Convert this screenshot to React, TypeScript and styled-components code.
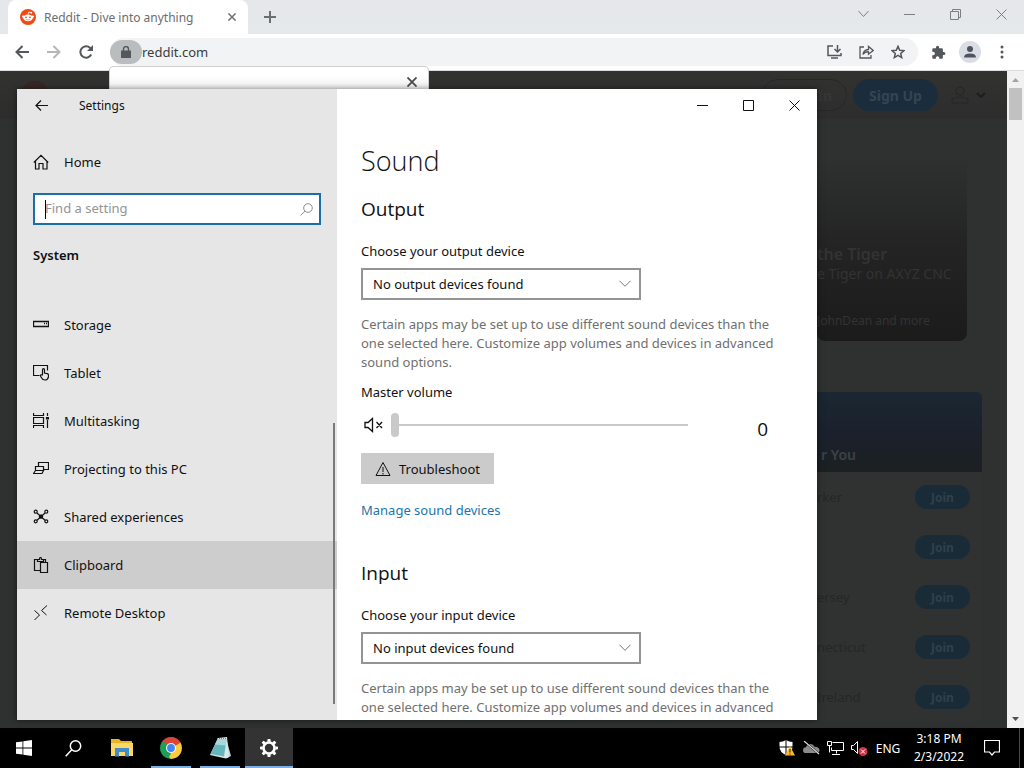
import React from "react";
import styled, { createGlobalStyle, css } from "styled-components";

const GlobalStyle = createGlobalStyle`
  * { box-sizing: border-box; }
  body { margin: 0; background: #000; overflow: hidden; }
  body, button, input, select { font-family: "Noto Sans", "Open Sans", sans-serif; font-size: 13px; }
  button { border: 0; padding: 0; background: none; color: inherit; }
  h1, h2, h3, p, ul { margin: 0; padding: 0; font-weight: 400; }
  ul { list-style: none; }
  svg { display: block; flex: none; }
`;

/* ---------- desktop ---------- */
const Desktop = styled.div`
  position: relative;
  display: flex;
  flex-direction: column;
  height: 100vh;
  overflow: hidden;
`;

/* ---------- browser ---------- */
const Browser = styled.div`
  flex: 1;
  min-height: 0;
  display: flex;
  flex-direction: column;
`;

const TabStrip = styled.div`
  display: flex;
  align-items: flex-start;
  height: 34px;
  padding-left: 8px;
  background: linear-gradient(#e6e7eb, #e4e9ea);
`;

const Tab = styled.div`
  display: flex;
  align-items: center;
  gap: 8px;
  width: 240px;
  height: 34px;
  padding: 0 9px 0 12px;
  border-radius: 8px 8px 0 0;
  background: #fff;
  color: #6c6d70;
  font-size: 12px;
`;

const TabTitle = styled.span`
  flex: 1;
  white-space: nowrap;
`;

const IconButton = styled.button<{ $w?: number; $h?: number }>`
  display: flex;
  align-items: center;
  justify-content: center;
  width: ${(p) => p.$w ?? 32}px;
  height: ${(p) => p.$h ?? 32}px;
`;

const Spacer = styled.div`
  flex: 1;
`;

const WindowButtons = styled.div`
  display: flex;
  color: #7b8082;
`;

const Toolbar = styled.div`
  display: flex;
  align-items: center;
  height: 37px;
  padding: 0 6px;
  border-bottom: 1px solid #dcdcdc;
  background: #fff;
  color: #54575b;
`;

const AddressBar = styled.div`
  flex: 1;
  display: flex;
  align-items: center;
  height: 28px;
  margin: 0 4px 0 8px;
  padding-right: 4px;
  border-radius: 14px;
  background: #f1f3f4;
`;

const LockButton = styled.button`
  display: flex;
  align-items: center;
  justify-content: center;
  width: 32px;
  height: 24px;
  border-radius: 12px;
  background: #babdbe;
`;

const AddressInput = styled.input`
  flex: 1;
  min-width: 0;
  border: 0;
  padding: 0;
  outline: 0;
  background: transparent;
  color: #3a3c3f;
`;

const Avatar = styled.span`
  display: flex;
  align-items: center;
  justify-content: center;
  width: 22px;
  height: 22px;
  border-radius: 50%;
  background: #dadde4;
  color: #4e535f;
`;

const Viewport = styled.div`
  flex: 1;
  min-height: 0;
  display: flex;
  background: #2e3130;
`;

const Page = styled.div`
  flex: 1;
  min-width: 0;
  overflow: hidden;
`;

const PageHeader = styled.header`
  display: flex;
  align-items: center;
  gap: 6px;
  height: 48px;
  padding: 0 21px;
  background: linear-gradient(#323231, #2c2d2c);
`;

const PageLogo = styled.div`
  width: 28px;
  height: 28px;
  border-radius: 50%;
  background: #352725;
`;

const PagePill = styled.button<{ $filled?: boolean }>`
  width: 85px;
  height: 32px;
  border-radius: 16px;
  border: 1px solid ${(p) => (p.$filled ? "#1b2d3d" : "#262827")};
  background: ${(p) => (p.$filled ? "#1b2d3d" : "transparent")};
  color: ${(p) => (p.$filled ? "#344552" : "#363737")};
  font-size: 14px;
  font-weight: 700;
  text-align: ${(p) => (p.$filled ? "center" : "right")};
  padding: 0 ${(p) => (p.$filled ? 0 : 14)}px 0 0;
`;

const UserMenu = styled.button`
  display: flex;
  align-items: center;
  gap: 6px;
  margin-left: 6px;
  color: #1d1f1f;
`;

const PageBody = styled.main`
  display: flex;
  flex-direction: column;
  align-items: flex-end;
  gap: 51px;
  padding: 42px 25px 0 0;
`;

const TrendCard = styled.article`
  display: flex;
  flex-direction: column;
  width: 150px;
  height: 180px;
  margin-right: 15px;
  padding: 83px 0 0;
  border-radius: 0 0 8px 8px;
  background: linear-gradient(#2e3030, #242424 45%, #1b1b1b);
  color: #333;
  white-space: nowrap;
`;

const TrendTitle = styled.h2`
  font-size: 16px;
  line-height: 20px;
  font-weight: 600;
`;

const TrendText = styled.p`
  font-size: 14px;
  line-height: 20px;
`;

const TrendFooter = styled.p`
  margin-top: 28px;
  font-size: 12px;
  line-height: 18px;
`;

const Communities = styled.section`
  width: 165px;
  border-radius: 0 6px 0 0;
  overflow: hidden;
  background: #303131;
`;

const CommunitiesHead = styled.h2`
  display: flex;
  align-items: flex-end;
  height: 80px;
  padding: 0 4px 8px;
  background: linear-gradient(#1a2732, #1b202b 60%, #1c2022);
  color: #3b4246;
  font-size: 14px;
  font-weight: 600;
`;

const CommunityRow = styled.li`
  display: flex;
  align-items: center;
  justify-content: space-between;
  height: 50px;
  padding-right: 12px;
  color: #252727;
`;

const JoinButton = styled.button`
  width: 55px;
  height: 24px;
  border-radius: 12px;
  background: #1a2b38;
  color: #30404b;
  font-size: 12px;
  font-weight: 700;
`;

const PageScrollbar = styled.div`
  display: flex;
  flex-direction: column;
  align-items: center;
  width: 17px;
  background: #f1f1f1;
`;

const ScrollThumb = styled.div`
  width: 13px;
  height: 32px;
  background: #c1c1c1;
`;

const Popup = styled.div`
  position: absolute;
  top: 66px;
  left: 109px;
  display: flex;
  justify-content: flex-end;
  width: 320px;
  height: 60px;
  border: 1px solid #cfcfcf;
  border-radius: 4px;
  background: linear-gradient(#fff 8px, #eee 24px);
  color: #4c4c4c;
`;

/* ---------- settings window ---------- */
const SettingsWindow = styled.div`
  position: absolute;
  top: 89px;
  bottom: 48px;
  left: 17px;
  display: flex;
  width: min(800px, calc(100vw - 34px));
  overflow: hidden;
  background: #fff;
  color: #111;
  box-shadow: 0 0 6px rgba(0, 0, 0, 0.5);
`;

const Sidebar = styled.nav`
  position: relative;
  flex: none;
  width: 320px;
  background: #e6e6e6;
`;

const SidebarTitle = styled.div`
  display: flex;
  align-items: center;
  gap: 14px;
  height: 32px;
  font-size: 12px;
`;

const NavItem = styled.a<{ $active?: boolean }>`
  display: flex;
  align-items: center;
  gap: 15px;
  height: 48px;
  padding-left: 16px;
  color: #111;
  text-decoration: none;
  ${(p) => p.$active && css`background: #cdcdcd;`}
`;

const HomeWrap = styled.div`
  padding: 17px 0 7px;
`;

const SearchBox = styled.label`
  position: relative;
  display: flex;
  align-items: center;
  height: 32px;
  margin: 0 16px;
  padding: 0 6px 0 10px;
  border: 2px solid #1b6fa8;
  background: #fff;
  color: #8d8d8d;
`;

const SearchInput = styled.input`
  flex: 1;
  min-width: 0;
  border: 0;
  padding: 0 0 2px;
  outline: 0;
  background: transparent;
  caret-color: transparent;
  &::placeholder { color: #949494; }
`;

const Caret = styled.span`
  position: absolute;
  left: 10px;
  width: 1px;
  height: 19px;
  background: #000;
`;

const Group = styled.h2`
  margin: 20px 16px 36px;
  font-size: 13px;
  line-height: 20px;
  font-weight: 600;
`;

const SidebarThumb = styled.div`
  position: absolute;
  right: 2px;
  bottom: 16px;
  width: 2px;
  height: 281px;
  background: #7a7a7a;
`;

const Panel = styled.section`
  flex: 1;
  min-width: 0;
  display: flex;
  flex-direction: column;
`;

const PanelTitlebar = styled.div`
  display: flex;
  justify-content: flex-end;
  flex: none;
  height: 32px;
`;

const PanelBody = styled.div`
  flex: 1;
  min-height: 0;
  overflow: hidden;
  padding: 22px 24px 0;
`;

const Title = styled.h1`
  font-family: "Open Sans", sans-serif;
  font-size: 27px;
  font-weight: 300;
  line-height: 36px;
`;

const Heading = styled.h2<{ $gap: number }>`
  margin-top: ${(p) => p.$gap}px;
  font-family: "Open Sans", sans-serif;
  font-size: 19px;
  line-height: 28px;
`;

const FieldLabel = styled.label<{ $gap: number }>`
  display: block;
  margin-top: ${(p) => p.$gap}px;
  line-height: 20px;
`;

const SelectWrap = styled.div`
  display: grid;
  align-items: center;
  width: 280px;
  margin-top: 7px;
  & > * { grid-area: 1 / 1; }
  & > svg { justify-self: end; margin-right: 10px; pointer-events: none; }
`;

const Select = styled.select`
  appearance: none;
  width: 100%;
  height: 32px;
  padding: 0 10px;
  border: 2px solid #949494;
  border-radius: 0;
  background: #fff;
  color: #111;
`;

const Description = styled.p`
  max-width: 424px;
  margin-top: 15px;
  line-height: 19px;
  color: #707070;
`;

const VolumeRow = styled.div`
  display: flex;
  align-items: flex-start;
  height: 32px;
  margin-top: 11px;
`;

const MuteButton = styled.button`
  display: flex;
  align-items: center;
  width: 30px;
  height: 24px;
  padding-left: 3px;
`;

const Slider = styled.input`
  appearance: none;
  width: 297px;
  height: 24px;
  margin: 0;
  background: linear-gradient(#c9c9c9, #c9c9c9) center / 100% 2px no-repeat;
  &::-webkit-slider-thumb {
    appearance: none;
    width: 8px;
    height: 24px;
    border-radius: 4px;
    background: #c9c9c9;
  }
`;

const VolumeValue = styled.output`
  width: 80px;
  font-family: "Open Sans", sans-serif;
  font-size: 19px;
  line-height: 32px;
  text-align: right;
`;

const ActionButton = styled.button`
  display: flex;
  align-items: center;
  gap: 8px;
  height: 31px;
  margin-top: 8px;
  padding: 0 14px;
  background: #cbcbcb;
`;

const TextLink = styled.a`
  display: block;
  margin-top: 16px;
  line-height: 20px;
  color: #1a75ad;
  text-decoration: none;
`;

/* ---------- taskbar ---------- */
const Taskbar = styled.footer`
  display: flex;
  align-items: stretch;
  flex: none;
  height: 40px;
  padding-right: 4px;
  background: #000;
  color: #fff;
`;

const Apps = styled.div`
  display: flex;
  gap: 1px;
`;

const TaskButton = styled.button<{ $state?: "open" | "active" }>`
  display: flex;
  align-items: center;
  justify-content: center;
  width: 48px;
  ${(p) =>
    p.$state &&
    css`
      background: linear-gradient(#7ab0e6, #7ab0e6) bottom / ${p.$state === "active" ? 48 : 40}px 2px no-repeat
        ${p.$state === "active" ? "#333" : "transparent"};
    `}
`;

const Tray = styled.div`
  display: flex;
  align-items: center;
  font-size: 12px;
`;

const Language = styled.button`
  width: 34px;
  font-size: 12px;
`;

const Clock = styled.time`
  width: 68px;
  line-height: 18px;
  text-align: center;
  font-size: 12px;
`;

const Notifications = styled.button`
  display: flex;
  align-items: center;
  justify-content: center;
  width: 47px;
  padding-right: 9px;
  border-right: 1px solid #4a4a4a;
`;

/* ---------- icons ---------- */
type IconProps = { w?: number; h?: number; box?: string; sw?: number; children: React.ReactNode };
const Line = ({ w = 16, h, box, sw = 1, children }: IconProps) => (
  <svg width={w} height={h ?? w} viewBox={box ?? `0 0 ${w} ${h ?? w}`} fill="none" stroke="currentColor" strokeWidth={sw} aria-hidden="true">
    {children}
  </svg>
);

const RedditIcon = () => (
  <svg width="16" height="16" viewBox="0 0 16 16" aria-hidden="true">
    <circle cx="8" cy="8" r="8" fill="#f04a15" />
    <path d="M8 5.6l.7-2.6 2.2.6" fill="none" stroke="#fff" strokeWidth=".8" />
    <circle cx="11.3" cy="3.7" r=".9" fill="#fff" />
    <circle cx="3.3" cy="7.6" r="1.2" fill="#fff" />
    <circle cx="12.7" cy="7.6" r="1.2" fill="#fff" />
    <ellipse cx="8" cy="8.9" rx="4.8" ry="3.4" fill="#fff" />
    <circle cx="6" cy="8.3" r=".9" fill="#f04a15" />
    <circle cx="10" cy="8.3" r=".9" fill="#f04a15" />
    <path d="M6.2 10.5q1.8 1 3.6 0" fill="none" stroke="#f04a15" strokeWidth=".6" />
  </svg>
);

const Cross = ({ size = 11, sw = 1 }: { size?: number; sw?: number }) => (
  <Line w={size} sw={sw} box="0 0 11 11"><path d="M.5.5l10 10M10.5.5l-10 10" /></Line>
);

const icons = {
  storage: <Line sw={1.3}><path d="M.5 4.500h15v5H.5z" /><path d="M11 6.500h1M13 6.500h1" /></Line>,
  tablet: (
    <Line sw={1.2}>
      <path d="M6.500 10.500h-6v-10h14v5" />
      <path d="M9.500 10.500V4.700a1 1 0 0 1 2 0V8l2.800.6q1.200.4 1.200 1.600v1.500q-.6 3.300-3.500 3.300-2.400 0-3.500-2.300l-1.200-2q.2-1.300 2.200-.7z" />
    </Line>
  ),
  multitask: (
    <Line sw={1.2}>
      <path d="M.5 0v2.500h10V0M.5 15v-2.500h10V15M.5 4.500h10v6H.5zM14.500 0v3M14.500 7v8" />
      <path d="M13.500 4.500h2v1.500h-2z" fill="currentColor" />
    </Line>
  ),
  project: (
    <Line sw={1.2}>
      <path d="M5.500 5.500v-4h10v7h-5" />
      <path d="M2.500 9.500v-4h8v4zM.5 12.500l2-3h8l-1.500 3z" />
    </Line>
  ),
  shared: (
    <Line sw={1.2}>
      <circle cx="2.700" cy="2.700" r="1.500" /><circle cx="13.300" cy="2.700" r="1.500" />
      <circle cx="2.700" cy="12.300" r="1.500" /><circle cx="13.300" cy="12.300" r="1.500" />
      <path d="M4 4l8 7.200M12 4l-8 7.200M6.500 6.200h3v3h-3z" />
    </Line>
  ),
  clipboard: (
    <Line sw={1.2}>
      <path d="M7 13.500H1.500v-11H5M10 2.500h2.500V5M4.500 4.500v-2h2q0-2 1-2t1 2h2v2z" />
      <path d="M7.500 5.500h7v10h-7z" />
    </Line>
  ),
  remote: <Line><path d="M1.500 5.500l5 4.500-5 5M14 .5L8.500 5.500 13.500 10" /></Line>,
  home: <Line sw={1.2}><path d="M2.500 7.500v7.500h3.500v-5.500h4V15h4V7.500M.8 8.500L8 1.300l7.200 7.200" /></Line>,
};

const Chevron = () => <Line w={12} h={8}><path d="M.5.8L6 6.300 11.500.8" stroke="#777" /></Line>;

const navItems: { label: string; icon: keyof typeof icons; active?: boolean }[] = [
  { label: "Storage", icon: "storage" },
  { label: "Tablet", icon: "tablet" },
  { label: "Multitasking", icon: "multitask" },
  { label: "Projecting to this PC", icon: "project" },
  { label: "Shared experiences", icon: "shared" },
  { label: "Clipboard", icon: "clipboard", active: true },
  { label: "Remote Desktop", icon: "remote" },
];

const communities = ["rker", "", "ersey", "necticut", "Ireland"];

const DeviceField = ({ kind }: { kind: "output" | "input" }) => (
  <>
    <FieldLabel $gap={18} htmlFor={kind}>Choose your {kind} device</FieldLabel>
    <SelectWrap>
      <Select id={kind}><option>No {kind} devices found</option></Select>
      <Chevron />
    </SelectWrap>
    <Description>
      Certain apps may be set up to use different sound devices than the one selected here. Customize app volumes and
      devices in advanced sound options.
    </Description>
  </>
);

const BrowserWindow = () => (
  <Browser>
    <TabStrip>
      <Tab>
        <RedditIcon />
        <TabTitle>Reddit - Dive into anything</TabTitle>
        <IconButton $w={14} $h={14} aria-label="Close tab"><Cross size={8} sw={2} /></IconButton>
      </Tab>
      <IconButton $w={44} $h={34} aria-label="New tab">
        <Line w={12} sw={2}><path d="M6 0v12M0 6h12" stroke="#6b6e71" /></Line>
      </IconButton>
      <Spacer />
      <WindowButtons>
        <IconButton $w={46} $h={28} aria-label="Search tabs"><Line w={11} h={8}><path d="M.5 1l5 5.500 5-5.500" /></Line></IconButton>
        <IconButton $w={46} $h={28} aria-label="Minimize browser"><Line w={11}><path d="M0 5.500h11" /></Line></IconButton>
        <IconButton $w={46} $h={28} aria-label="Restore browser"><Line w={11}><path d="M.5 2.500h8v8h-8zM2.500 2.500v-2h8v8h-2" /></Line></IconButton>
        <IconButton $w={46} $h={28} aria-label="Close browser"><Cross /></IconButton>
      </WindowButtons>
    </TabStrip>
    <Toolbar>
      <IconButton aria-label="Back"><Line w={14} sw={2}><path d="M14 7H1.500M7.500 1l-6 6 6 6" /></Line></IconButton>
      <IconButton aria-label="Forward"><Line w={14} sw={2}><path d="M0 7h12.500M6.500 1l6 6-6 6" stroke="#b4b6b8" /></Line></IconButton>
      <IconButton aria-label="Reload">
        <Line w={14} sw={2}><path d="M12.200 9.500A5.700 5.700 0 1 1 11.200 3L13 4.800" /><path d="M14 0v6H8z" fill="currentColor" stroke="none" /></Line>
      </IconButton>
      <AddressBar>
        <LockButton aria-label="Site information">
          <Line w={10} h={12}><path d="M0 4.500h10V12H0z" fill="currentColor" stroke="none" /><path d="M2.500 5V3a2.500 2.500 0 0 1 5 0v2" strokeWidth="1.400" /></Line>
        </LockButton>
        <AddressInput aria-label="Address" defaultValue="reddit.com" />
        <IconButton aria-label="Install">
          <Line w={15} h={14} sw={1.500}><path d="M6 1H1v9.500h13V8M4 13h7" /><path d="M10.500 0v6.500M7.500 4l3 3 3-3" /></Line>
        </IconButton>
        <IconButton aria-label="Share">
          <Line w={15} h={14} sw={1.300}><path d="M5 2H1v11h11v-3M4 9.500q.5-4.500 5.500-5V1.500l4.700 4-4.700 3.700V6.800Q6 6.500 4 9.500z" /></Line>
        </IconButton>
        <IconButton aria-label="Bookmark">
          <Line w={14} sw={1.500}><path d="M7 1.300l1.700 3.900 4.200.4-3.200 2.800 1 4.200L7 10.400l-3.700 2.200 1-4.200L1.100 5.600l4.200-.4z" /></Line>
        </IconButton>
      </AddressBar>
      <IconButton aria-label="Extensions">
        <svg width="15" height="15" viewBox="0 0 24 24" fill="currentColor" aria-hidden="true">
          <path d="M20.500 11H19V7a2 2 0 0 0-2-2h-4V3.500a2.500 2.500 0 0 0-5 0V5H4a2 2 0 0 0-2 2v3.800h1.500a2.700 2.700 0 0 1 0 5.400H2V20a2 2 0 0 0 2 2h3.800v-1.500a2.700 2.700 0 0 1 5.400 0V22H17a2 2 0 0 0 2-2v-4h1.500a2.500 2.500 0 0 0 0-5z" />
        </svg>
      </IconButton>
      <IconButton aria-label="Profile">
        <Avatar><svg width="14" height="14" viewBox="0 0 14 14" fill="currentColor" aria-hidden="true"><circle cx="7" cy="4" r="3" /><path d="M1 12.500q0-4 6-4t6 4z" /></svg></Avatar>
      </IconButton>
      <IconButton aria-label="Menu">
        <svg width="4" height="14" viewBox="0 0 4 14" fill="currentColor" aria-hidden="true"><circle cx="2" cy="2" r="1.500" /><circle cx="2" cy="7" r="1.500" /><circle cx="2" cy="12" r="1.500" /></svg>
      </IconButton>
    </Toolbar>
    <Viewport>
      <Page>
        <PageHeader>
          <PageLogo />
          <Spacer />
          <PagePill>In</PagePill>
          <PagePill $filled>Sign Up</PagePill>
          <UserMenu aria-label="User menu">
            <Line w={20}><circle cx="10" cy="6" r="4" stroke="#242626" /><path d="M2 18v-4q8-4 16 0v4z" stroke="#242626" /></Line>
            <Line w={10} h={6} sw={2}><path d="M1 1l4 4 4-4" /></Line>
          </UserMenu>
        </PageHeader>
        <PageBody>
          <TrendCard>
            <TrendTitle>the Tiger</TrendTitle>
            <TrendText>e Tiger on AXYZ CNC</TrendText>
            <TrendFooter>JohnDean and more</TrendFooter>
          </TrendCard>
          <Communities>
            <CommunitiesHead>r You</CommunitiesHead>
            <ul>
              {communities.map((name, i) => (
                <CommunityRow key={i}><span>{name}</span><JoinButton>Join</JoinButton></CommunityRow>
              ))}
            </ul>
          </Communities>
        </PageBody>
      </Page>
      <PageScrollbar>
        <svg width="17" height="17" viewBox="0 0 17 17" aria-hidden="true"><path d="M5 11l3.500-4 3.500 4z" fill="#a3a3a3" /></svg>
        <ScrollThumb />
        <Spacer />
        <svg width="17" height="17" viewBox="0 0 17 17" aria-hidden="true"><path d="M5 6l3.500 4L12 6z" fill="#505050" /></svg>
      </PageScrollbar>
    </Viewport>
  </Browser>
);

const SettingsApp = () => (
  <SettingsWindow>
    <Sidebar>
      <SidebarTitle>
        <IconButton $w={48} aria-label="Back to previous"><Line w={13} h={11}><path d="M13 5.500H1M6 .5l-5 5 5 5" strokeWidth="1.200" /></Line></IconButton>
        <span>Settings</span>
      </SidebarTitle>
      <HomeWrap><NavItem href="#home">{icons.home}Home</NavItem></HomeWrap>
      <SearchBox>
        <Caret />
        <SearchInput type="text" aria-label="Find a setting" placeholder="Find a setting" />
        <Line w={13}><circle cx="8" cy="5" r="4.300" /><path d="M5 8.200L.5 12.500" /></Line>
      </SearchBox>
      <Group>System</Group>
      <ul>
        {navItems.map((n) => (
          <li key={n.label}><NavItem href={`#${n.icon}`} $active={n.active}>{icons[n.icon]}{n.label}</NavItem></li>
        ))}
      </ul>
      <SidebarThumb />
    </Sidebar>
    <Panel>
      <PanelTitlebar>
        <IconButton $w={46} aria-label="Minimize"><Line w={11}><path d="M0 5.500h11" /></Line></IconButton>
        <IconButton $w={46} aria-label="Maximize"><Line w={11}><path d="M.5.5h10v10H.5z" /></Line></IconButton>
        <IconButton $w={46} aria-label="Close"><Cross /></IconButton>
      </PanelTitlebar>
      <PanelBody>
        <Title>Sound</Title>
        <Heading $gap={16}>Output</Heading>
        <DeviceField kind="output" />
        <FieldLabel $gap={10} htmlFor="volume">Master volume</FieldLabel>
        <VolumeRow>
          <MuteButton aria-label="Unmute">
            <Line w={20} h={16} sw={1.300}><path d="M1 5.500h3L8.500 1.500v13L4 10.500H1zM12.500 5l5.500 6M18 5l-5.500 6" /></Line>
          </MuteButton>
          <Slider id="volume" type="range" min={0} max={100} defaultValue={0} />
          <VolumeValue htmlFor="volume">0</VolumeValue>
        </VolumeRow>
        <ActionButton>
          <Line><path d="M8 1.500l7 13H1zM8 6v5M8 12v1.500" /></Line>
          Troubleshoot
        </ActionButton>
        <TextLink href="#devices">Manage sound devices</TextLink>
        <Heading $gap={39}>Input</Heading>
        <DeviceField kind="input" />
      </PanelBody>
    </Panel>
  </SettingsWindow>
);

const gearTeeth = [0, 45, 90, 135, 180, 225, 270, 315];

const TaskbarView = () => (
  <Taskbar>
    <Apps>
      <TaskButton aria-label="Start">
        <svg width="16" height="16" viewBox="0 0 16 16" fill="#fff" aria-hidden="true"><path d="M0 2.300l6.500-.9v6.200H0zM7.300 1.300L16 0v7.600H7.300zM0 8.400h6.500v6.200L0 13.700zM7.300 8.400H16V16l-8.700-1.300z" /></svg>
      </TaskButton>
      <TaskButton aria-label="Search"><Line w={17} sw={1.500}><circle cx="10.500" cy="6" r="5.200" /><path d="M6.700 9.800L.7 16.200" /></Line></TaskButton>
      <TaskButton aria-label="File Explorer">
        <svg width="22" height="18" viewBox="0 0 22 18" aria-hidden="true">
          <path d="M0 0h8l2 2h11v15H0z" fill="#e9b42c" /><path d="M0 4h22v13H0z" fill="#fbd768" />
          <path d="M4 9h14v8.500h-4V13H8v4.500H4z" fill="#3d8ecb" />
        </svg>
      </TaskButton>
      <TaskButton $state="open" aria-label="Chrome">
        <svg width="22" height="22" viewBox="0 0 22 22" aria-hidden="true">
          <path d="M11 11L1.500 5.500A11 11 0 0 1 20.500 5.500z" fill="#db4437" />
          <path d="M11 11L20.500 5.500A11 11 0 0 1 11 22z" fill="#fccc3d" />
          <path d="M11 11L11 22A11 11 0 0 1 1.500 5.500z" fill="#1e9f58" />
          <path d="M11 6h9.700q-4-6-9.700-6z" fill="#db4437" />
          <path d="M15.300 13.500L11 22l-2-2 4-7z" fill="#fccc3d" />
          <path d="M6.700 13.500L1.500 5.500 4 5l5 4z" fill="#1e9f58" />
          <circle cx="11" cy="11" r="5" fill="#fff" /><circle cx="11" cy="11" r="3.900" fill="#4285f4" />
        </svg>
      </TaskButton>
      <TaskButton $state="open" aria-label="Notepad">
        <svg width="23" height="22" viewBox="0 0 23 22" aria-hidden="true">
          <path d="M17 1l5 18-4 2z" fill="#c8cdcd" /><path d="M9 1l9-1 2 20-3 1.500L1 18z" fill="#d6e8e8" />
          <path d="M8.500 2.500h9L15 19.500 1.500 17z" fill="#66b5bd" /><path d="M8.500 2.500h9l-1 6-10.500-1z" fill="#a9d8dc" />
          <path d="M8 1.500h10" stroke="#777" strokeDasharray="1 1" />
        </svg>
      </TaskButton>
      <TaskButton $state="active" aria-label="Settings">
        <svg width="18" height="18" viewBox="-9 -9 18 18" fill="#fff" aria-hidden="true">
          <circle r="5.500" fill="none" stroke="#fff" strokeWidth="2.600" />
          {gearTeeth.map((a) => <path key={a} d="M-1.800-6.300L-1.300-9h2.600l.5 2.700z" transform={`rotate(${a})`} />)}
        </svg>
      </TaskButton>
    </Apps>
    <Spacer />
    <Tray>
      <IconButton $w={24} aria-label="Security">
        <svg width="16" height="16" viewBox="0 0 16 16" aria-hidden="true">
          <path d="M7 0q3 2 6.500 2v5q0 5-6.500 8Q.5 12 .5 7V2Q4 2 7 0z" fill="#fff" /><path d="M7 0v15M0 7h14" stroke="#000" />
          <path d="M11 6l5 9.500H6z" fill="#fbb72c" /><path d="M11 9v3.500M11 13.500v1" stroke="#222" />
        </svg>
      </IconButton>
      <IconButton $w={24} aria-label="Cloud sync">
        <svg width="17" height="14" viewBox="0 0 17 14" aria-hidden="true">
          <path d="M3 12q-3 0-3-2.800Q0 6.500 3 6.300 4 3 7.500 3q3 0 4 2.700Q16.500 6 16.500 9q0 3-3 3z" fill="#8b8b8b" />
          <path d="M1 0l15 13" stroke="#000" strokeWidth="2" /><path d="M1 0l15 13" stroke="#ddd" strokeWidth="1.200" />
        </svg>
      </IconButton>
      <IconButton $w={24} aria-label="Network">
        <Line w={17} h={14}><path d="M5.500 1.500h11v8h-12v-3M9.500 9.500v3M5 13.500h8M.5.500h4v4h-4zM2.500 4.500v7" /></Line>
      </IconButton>
      <IconButton $w={24} aria-label="Volume">
        <Line w={17}><path d="M.5 5.500h2l4-4v12l-4-4h-2z" /><circle cx="12" cy="11.500" r="4.500" fill="#d42f45" stroke="none" /><path d="M10 9.500l4 4M14 9.500l-4 4" stroke="#fff" /></Line>
      </IconButton>
      <Language>ENG</Language>
      <Clock>3:18 PM<br />2/3/2022</Clock>
    </Tray>
    <Notifications aria-label="Notifications">
      <Line w={16} h={16}><path d="M.5.500h15v11.500h-5l-2.500 3-2.500-3h-5z" strokeWidth="1.200" /></Line>
    </Notifications>
  </Taskbar>
);

export default function App() {
  return (
    <Desktop>
      <GlobalStyle />
      <BrowserWindow />
      <Popup><IconButton $w={32} $h={30} aria-label="Dismiss"><Cross size={10} sw={2} /></IconButton></Popup>
      <SettingsApp />
      <TaskbarView />
    </Desktop>
  );
}
